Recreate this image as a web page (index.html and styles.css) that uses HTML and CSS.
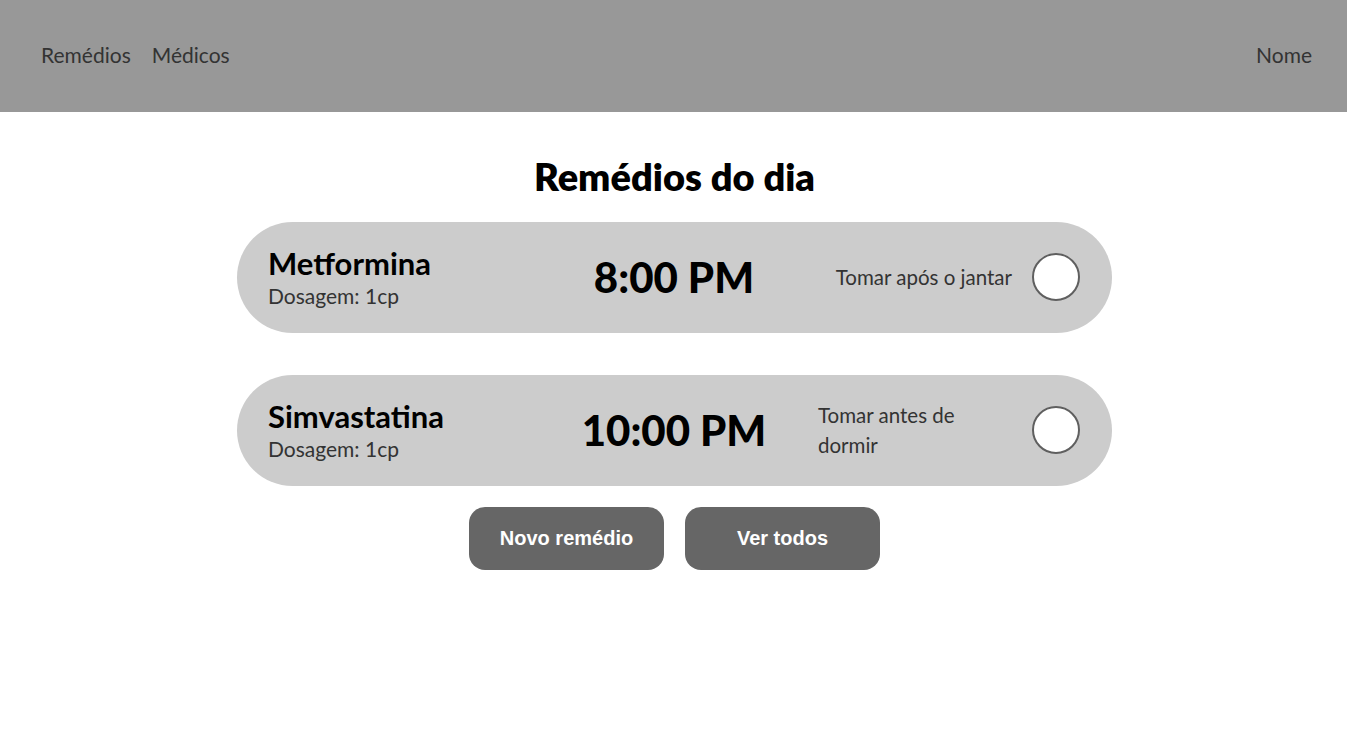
FILE: index.html
```html
<!DOCTYPE html>
<html lang="pt-BR">
<head>
<meta charset="utf-8">
<title>Remédios do dia</title>
<link rel="stylesheet" href="styles.css">
</head>
<body>
<header class="topbar">
  <nav class="nav">
    <a class="nav-link" href="#">Remédios</a>
    <a class="nav-link" href="#">Médicos</a>
  </nav>
  <a class="nav-link" href="#">Nome</a>
</header>
<main class="main">
  <h1 class="title">Remédios do dia</h1>
  <ul class="list">
    <li class="card">
      <div class="info">
        <div class="name">Metformina</div>
        <div class="dose">Dosagem: 1cp</div>
      </div>
      <div class="time">8:00 PM</div>
      <div class="side">
        <div class="note">Tomar após o jantar</div>
        <span class="check"></span>
      </div>
    </li>
    <li class="card">
      <div class="info">
        <div class="name">Simvastatina</div>
        <div class="dose">Dosagem: 1cp</div>
      </div>
      <div class="time">10:00 PM</div>
      <div class="side">
        <div class="note">Tomar antes de dormir</div>
        <span class="check"></span>
      </div>
    </li>
  </ul>
  <div class="actions">
    <button class="btn">Novo remédio</button>
    <button class="btn">Ver todos</button>
  </div>
</main>
</body>
</html>
```
FILE: styles.css
```css
* { box-sizing: border-box; }
body {
  margin: 0;
  font-family: Lato, "Noto Sans", sans-serif;
  background: #fff;
  color: #000;
}
.topbar {
  height: 112px;
  background: #989898;
  display: flex;
  align-items: center;
  justify-content: space-between;
  padding: 0 35px 4px 41px;
}
.nav { display: flex; gap: 21px; }
.nav-link {
  color: #333;
  text-decoration: none;
  font-size: 21px;
}
.main {
  padding: 43px 0 0 2px;
  display: flex;
  flex-direction: column;
  align-items: center;
}
.title {
  margin: 0 0 25px;
  font-size: 38px;
  line-height: 42px;
  font-weight: 800;
}
.list {
  list-style: none;
  margin: 0;
  padding: 0;
  display: flex;
  flex-direction: column;
  gap: 42px;
}
.card {
  width: 875px;
  height: 111px;
  background: #cccccc;
  border-radius: 56px;
  display: grid;
  grid-template-columns: 1fr auto 1fr;
  align-items: center;
  padding: 0 32px 2px 31px;
}
.info { display: flex; flex-direction: column; }
.name {
  font-size: 31px;
  font-weight: 700;
  line-height: 38px;
}
.dose {
  font-size: 21px;
  color: #333;
  line-height: 28px;
}
.time {
  font-size: 42px;
  font-weight: 900;
}
.side {
  display: flex;
  align-items: center;
  justify-content: flex-end;
  gap: 20px;
}
.note {
  max-width: 194px;
  font-size: 20.5px;
  line-height: 30px;
  color: #333;
}
.check {
  flex: none;
  width: 48px;
  height: 48px;
  border-radius: 50%;
  background: #fff;
  border: 2px solid #5f5f5f;
}
.actions {
  margin-top: 21px;
  display: flex;
  gap: 21px;
}
.btn {
  width: 195px;
  height: 63px;
  border: none;
  border-radius: 16px;
  background: #666;
  color: #fff;
  font-family: "Liberation Sans", Arial, sans-serif;
  font-weight: 700;
  font-size: 20px;
}
```
